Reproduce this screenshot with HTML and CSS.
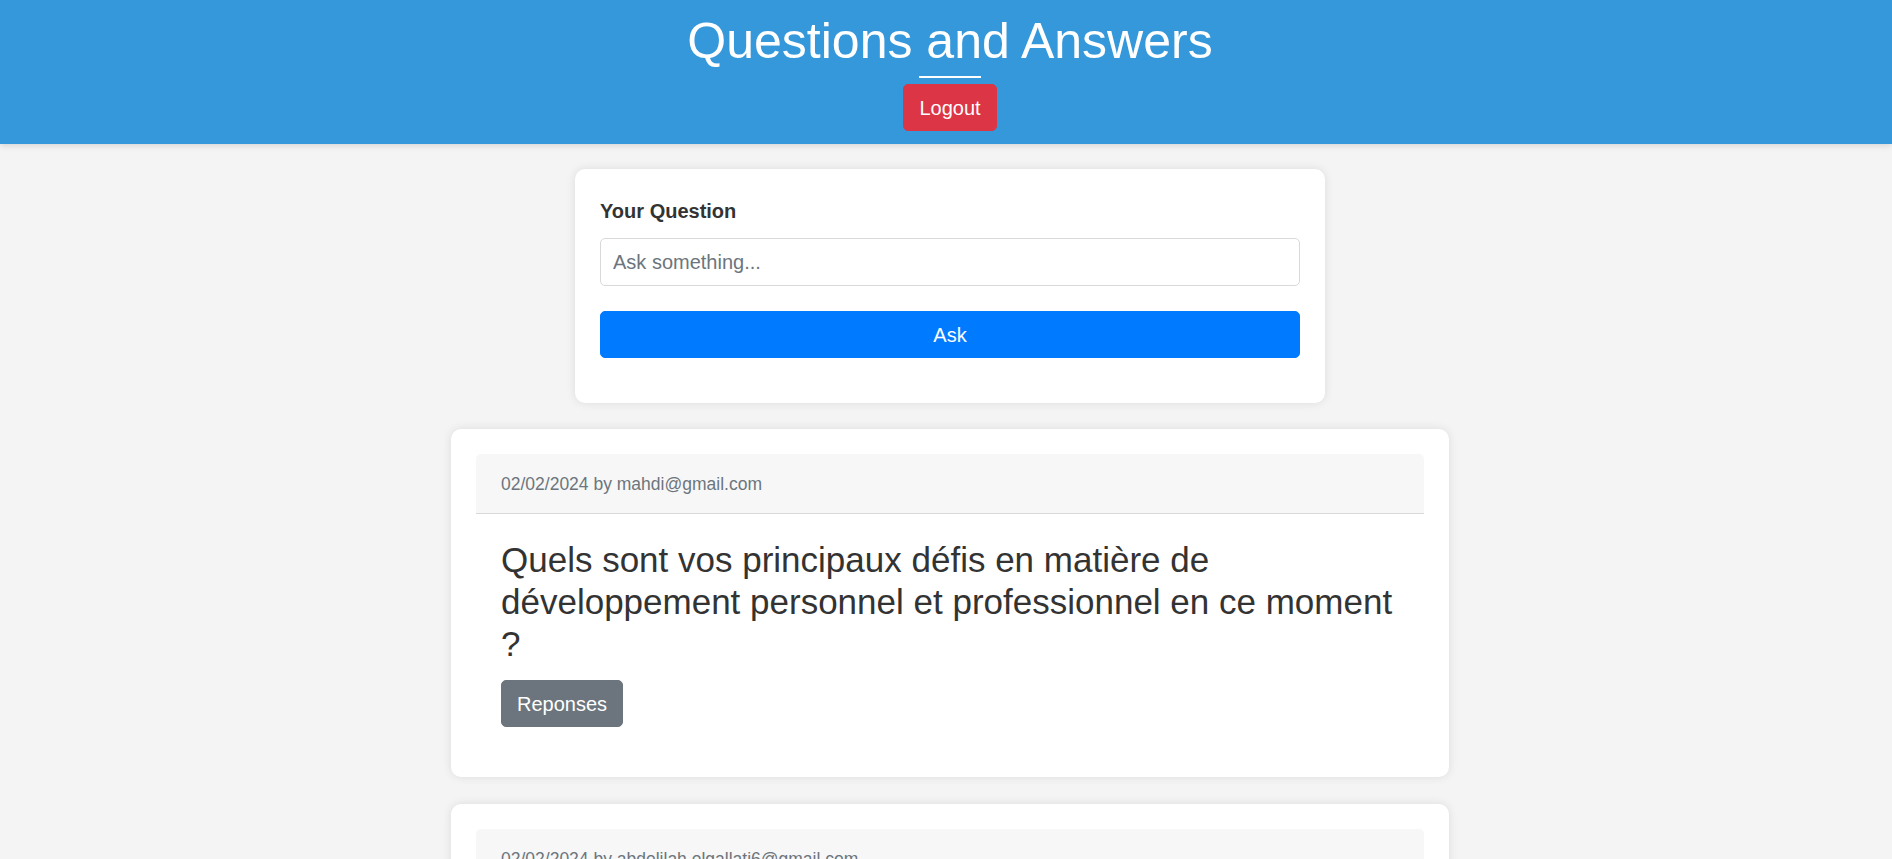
FILE: index.html
```html
<!DOCTYPE html>
<html lang="en">
<head>
<meta charset="utf-8">
<title>Questions and Answers</title>
<link rel="stylesheet" href="styles.css">
</head>
<body>
<header class="topbar">
  <h1 class="title">Questions and Answers</h1>
  <div class="title-rule"></div>
  <button class="btn btn-danger">Logout</button>
</header>
<main class="page">
  <form class="card ask-card">
    <label class="ask-label" for="q">Your Question</label>
    <input id="q" class="ask-input" type="text" placeholder="Ask something...">
    <button type="button" class="btn btn-primary btn-block">Ask</button>
  </form>
  <div class="questions">
    <article class="card q-card">
      <div class="q-header"><small class="q-meta">02/02/2024 by mahdi@gmail.com</small></div>
      <div class="q-body">
        <h3 class="q-title">Quels sont vos principaux défis en matière de développement personnel et professionnel en ce moment ?</h3>
        <button class="btn btn-secondary">Reponses</button>
      </div>
    </article>
    <article class="card q-card">
      <div class="q-header"><small class="q-meta">02/02/2024 by abdelilah.elgallati6@gmail.com</small></div>
      <div class="q-body">
        <h3 class="q-title">Quelle est votre plus grande source de motivation au quotidien ?</h3>
        <button class="btn btn-secondary">Reponses</button>
      </div>
    </article>
  </div>
</main>
</body>
</html>
```
FILE: styles.css
```css
* { box-sizing: border-box; }
html, body {
  margin: 0;
  padding: 0;
}
body {
  background: #f4f4f4;
  font-family: "Liberation Sans", Arial, sans-serif;
  font-size: 20px;
  line-height: 1.5;
  color: #333;
}
.topbar {
  background: #3498db;
  color: #fff;
  display: flex;
  flex-direction: column;
  align-items: center;
  padding: 11px 0 13px 8px;
  box-shadow: 0 2px 6px rgba(0,0,0,0.12);
  position: relative;
}
.title {
  margin: 0;
  font-size: 50px;
  font-weight: 400;
  line-height: 60px;
}
.title-rule {
  width: 62px;
  height: 2px;
  background: #fff;
  margin: 5px 0 6px;
}
.btn {
  font-family: inherit;
  font-size: 20px;
  line-height: 30px;
  padding: 7.5px 15px;
  border: 1px solid transparent;
  border-radius: 5px;
  color: #fff;
  cursor: pointer;
  height: 47px;
}
.btn-danger { background: #dc3545; border-color: #dc3545; }
.btn-primary { background: #007bff; border-color: #007bff; }
.btn-secondary { background: #6c757d; border-color: #6c757d; }
.btn-block { display: block; width: 100%; }
.page {
  display: flex;
  flex-direction: column;
  align-items: center;
  padding: 25px 0 40px 8px;
}
.card {
  background: #fff;
  border-radius: 10px;
  box-shadow: 0 0 10px rgba(0,0,0,0.1);
  padding: 25px;
}
.ask-card {
  width: 750px;
  margin: 0 0 26px;
}
.ask-label {
  display: block;
  font-weight: 700;
  font-size: 20px;
  line-height: 30px;
  margin-top: 2px;
  margin-bottom: 12px;
}
.ask-input {
  display: block;
  width: 100%;
  height: 48px;
  padding: 8px 12px;
  font-family: inherit;
  font-size: 20px;
  color: #495057;
  border: 1px solid #d9d9d9;
  border-radius: 5px;
  margin-bottom: 25px;
}
.ask-input::placeholder { color: #6c757d; }
.ask-card .btn-block { margin-bottom: 20px; }
.questions {
  display: flex;
  flex-direction: column;
  gap: 27px;
}
.q-card {
  width: 998px;
}
.q-header {
  background: #f7f7f7;
  border-bottom: 1px solid #d9d9d9;
  border-radius: 5px 5px 0 0;
  padding: 15px 25px;
  line-height: 28px;
}
.q-meta {
  font-size: 17.5px;
  color: #6c757d;
}
.q-body {
  padding: 25px;
}
.q-title {
  margin: 0 0 15px;
  font-size: 35px;
  font-weight: 400;
  line-height: 42px;
  color: #333;
}
```
